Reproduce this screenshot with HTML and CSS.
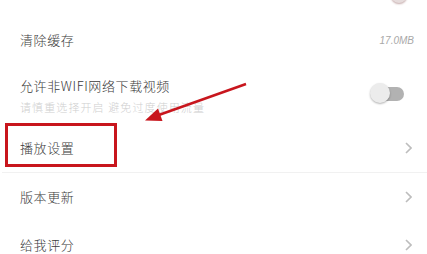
FILE: index.html
```html
<!DOCTYPE html>
<html>
<head>
<meta charset="utf-8">
<link rel="stylesheet" href="styles.css">
</head>
<body>
<div class="page">
  <div class="stub"><span class="stub-knob"></span></div>
  <div class="row">
    <span class="label">清除缓存</span>
    <span class="value">17.0MB</span>
  </div>
  <div class="row tall">
    <div class="texts">
      <span class="label">允许非WIFI网络下载视频</span>
      <span class="sub">请慎重选择开启 避免过度使用流量</span>
    </div>
    <span class="toggle"><span class="track"></span><span class="knob"></span></span>
  </div>
  <div class="row divided">
    <span class="label">播放设置</span>
    <svg class="chev" width="7" height="12" viewBox="0 0 7 12"><polyline points="1,1 6,6 1,11" fill="none" stroke="#bdbdbd" stroke-width="1.6"/></svg>
  </div>
  <div class="row">
    <span class="label">版本更新</span>
    <svg class="chev" width="7" height="12" viewBox="0 0 7 12"><polyline points="1,1 6,6 1,11" fill="none" stroke="#bdbdbd" stroke-width="1.6"/></svg>
  </div>
  <div class="row">
    <span class="label">给我评分</span>
    <svg class="chev" width="7" height="12" viewBox="0 0 7 12"><polyline points="1,1 6,6 1,11" fill="none" stroke="#bdbdbd" stroke-width="1.6"/></svg>
  </div>

  <div class="highlight"></div>
  <svg class="arrow" width="427" height="254" viewBox="0 0 427 254">
    <line x1="246" y1="84" x2="156" y2="116" stroke="#c8161d" stroke-width="2.4"/>
    <polygon points="145,120.5 162.5,121 158,108.5" fill="#c8161d"/>
  </svg>
</div>
</body>
</html>
```
FILE: styles.css
```css
html, body {
  margin: 0;
  padding: 0;
  background: #ffffff;
}
body {
  font-family: "Noto Sans CJK SC", "Noto Sans", sans-serif;
  color: #333333;
}
.page {
  position: relative;
  width: 427px;
  height: 254px;
  overflow: hidden;
}
.stub {
  height: 16px;
  display: flex;
  justify-content: flex-end;
  padding-right: 20px;
  overflow: hidden;
}
.stub-knob {
  width: 16px;
  height: 16px;
  border-radius: 50%;
  margin-top: -13px;
  background: #e6dcdc;
  box-shadow: 0 1px 2px rgba(120, 60, 60, 0.45);
}
.row {
  height: 48px;
  display: flex;
  align-items: center;
  justify-content: space-between;
  padding: 0 15px 0 20px;
}
.row.tall {
  height: 60px;
  padding-right: 23px;
}
.row.divided {
  border-bottom: 1px solid #f1f1f1;
  margin-left: 2px;
  padding-left: 18px;
}
.label {
  font-size: 13px;
  font-weight: 300;
  letter-spacing: 0.6px;
  line-height: 16px;
  color: #3a3a3a;
}
.texts {
  display: flex;
  flex-direction: column;
  gap: 7px;
  padding-top: 3px;
}
.sub {
  font-size: 11px;
  font-weight: 300;
  line-height: 13px;
  color: #cfcfcf;
  letter-spacing: 1.1px;
}
.value {
  font-family: "Liberation Sans", sans-serif;
  font-style: italic;
  font-size: 10px;
  color: #a8a8a8;
  margin-right: -2px;
}
.toggle {
  position: relative;
  width: 34px;
  height: 21px;
  margin-top: -2px;
}
.track {
  position: absolute;
  left: 10px;
  top: 4px;
  width: 24px;
  height: 14px;
  border-radius: 7px;
  background: #b2b2b2;
}
.knob {
  position: absolute;
  left: 0;
  top: 0;
  width: 20px;
  height: 20px;
  border-radius: 50%;
  background: #ececec;
  box-shadow: 0 1px 2px rgba(0, 0, 0, 0.3);
}
.chev {
  display: block;
}
.highlight {
  position: absolute;
  left: 5px;
  top: 123px;
  width: 106px;
  height: 38px;
  border: 3px solid #c8161d;
}
.arrow {
  position: absolute;
  left: 0;
  top: 0;
  pointer-events: none;
}
```
